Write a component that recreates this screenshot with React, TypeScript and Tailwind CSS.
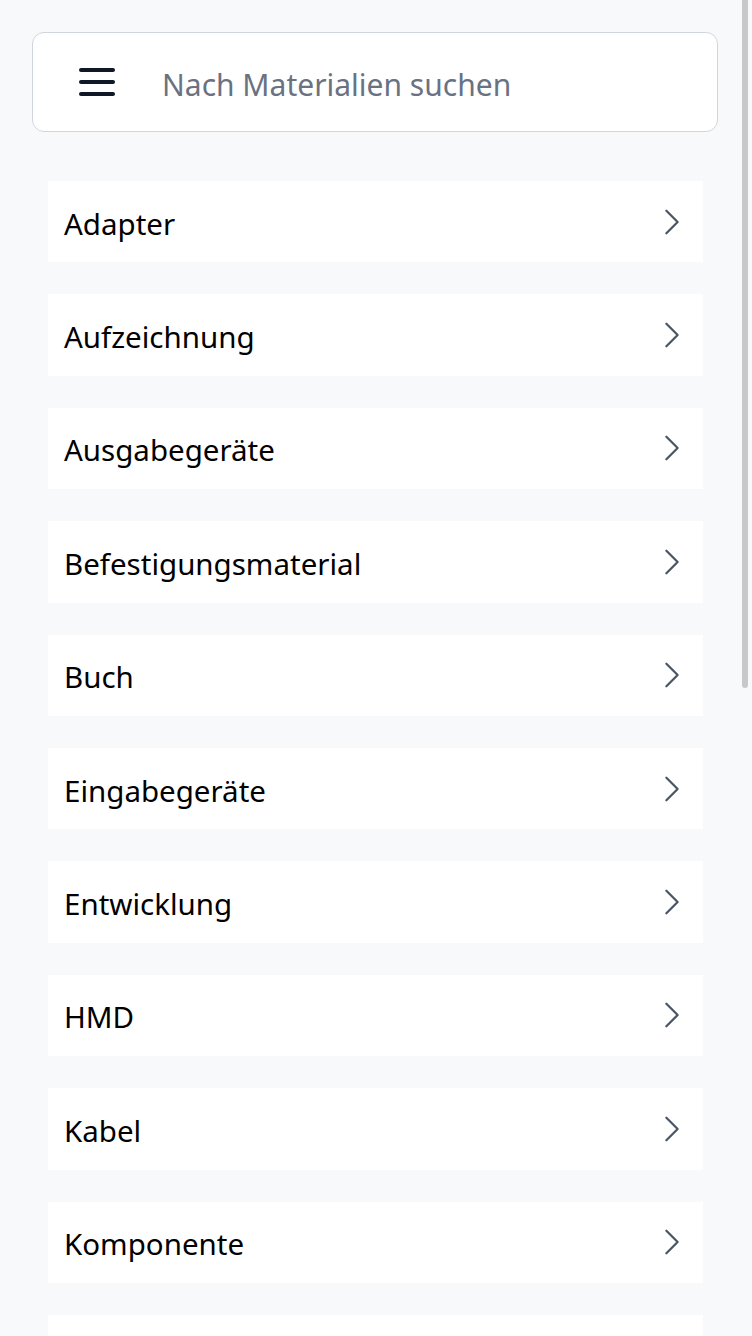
import React from "react";

const items = [
  "Adapter",
  "Aufzeichnung",
  "Ausgabegeräte",
  "Befestigungsmaterial",
  "Buch",
  "Eingabegeräte",
  "Entwicklung",
  "HMD",
  "Kabel",
  "Komponente",
  "",
];

function MenuIcon() {
  return (
    <svg width="48" height="48" viewBox="0 0 24 24" fill="none" stroke="currentColor" strokeWidth="2" strokeLinecap="round" strokeLinejoin="round">
      <line x1="4" y1="6" x2="20" y2="6" />
      <line x1="4" y1="12" x2="20" y2="12" />
      <line x1="4" y1="18" x2="20" y2="18" />
    </svg>
  );
}

function Chevron() {
  return (
    <svg width="36" height="36" viewBox="0 0 24 24" fill="none" stroke="currentColor" strokeWidth="1.5" strokeLinecap="round" strokeLinejoin="round">
      <path d="m8.25 4.5 7.5 7.5-7.5 7.5" />
    </svg>
  );
}

export default function App() {
  return (
    <div
      className="relative h-[1336px] w-[752px] overflow-hidden bg-[#f8f9fb]"
      style={{ fontFamily: '"Noto Sans", "Open Sans", sans-serif' }}
    >
      <div className="pt-[32px] pl-[32px]">
        <div className="flex h-[100px] w-[686px] items-center rounded-[12px] border border-gray-300 bg-white pl-[40px]">
          <span className="text-gray-900">
            <MenuIcon />
          </span>
          <input
            className="ml-[41px] mt-[4px] flex-1 bg-transparent text-[30px] text-gray-900 outline-none placeholder:text-gray-500"
            placeholder="Nach Materialien suchen"
          />
        </div>
        <div className="ml-[16px] mt-[49px] flex w-[655px] flex-col gap-[32px]">
          {items.map((name, i) => (
            <div
              key={i}
              className="flex h-[81.4px] shrink-0 items-center justify-between bg-white pl-[16px] pr-[13px]"
            >
              <span className="pt-[4px] text-[29.5px] text-black">{name}</span>
              <span className="text-gray-600">
                <Chevron />
              </span>
            </div>
          ))}
        </div>
      </div>
      <div className="absolute right-[4px] top-0 h-[688px] w-[6px] rounded-b-full bg-[#c8c8c8]" />
    </div>
  );
}
